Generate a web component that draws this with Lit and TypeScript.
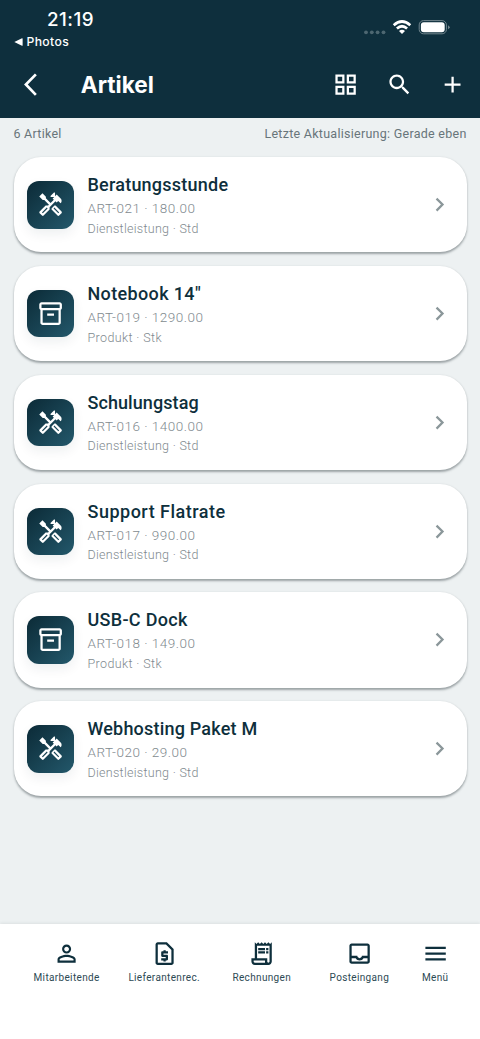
import { LitElement, html, css, svg } from "lit";
import { customElement, property } from "lit/decorators.js";
import { styleMap } from "lit/directives/style-map.js";

const ICONS: Record<string, string> = {
  back: "M17.5 3.77L15.8 2.1 6.2 12l9.6 9.9 1.7-1.67L9.54 12z",
  grid: "M3 3v8h8V3H3zm6 6H5V5h4v4zm-6 4v8h8v-8H3zm6 6H5v-4h4v4zm4-16v8h8V3h-8zm6 6h-4V5h4v4zm-6 4v8h8v-8h-8zm6 6h-4v-4h4v4z",
  search:
    "M15.5 14h-.79l-.28-.27C15.41 12.59 16 11.11 16 9.5 16 5.91 13.09 3 9.5 3S3 5.91 3 9.5 5.91 16 9.5 16c1.61 0 3.09-.59 4.23-1.57l.27.28v.79l5 4.99L20.49 19l-4.99-5zm-6 0C7.01 14 5 11.99 5 9.5S7.01 5 9.5 5 14 7.01 14 9.5 11.99 14 9.5 14z",
  add: "M19 13h-6v6h-2v-6H5v-2h6V5h2v6h6v2z",
  tools:
    "M21.67 18.17l-5.3-5.3h-.99l-2.54 2.54v.99l5.3 5.3c.39.39 1.02.39 1.41 0l2.12-2.12c.39-.38.39-1.02 0-1.41zm-2.83 1.42l-4.24-4.24.71-.71 4.24 4.24-.71.71zM17.34 10.19l1.41-1.41 2.12 2.12c1.17-1.17 1.17-3.07 0-4.24l-3.54-3.54-1.41 1.41V1.71L15.22 1l-3.54 3.54.71.71h2.83l-1.41 1.41 1.06 1.06-2.89 2.89-4.13-4.13V5.06L4.83 2.04 2 4.87 5.03 7.9h1.41l4.13 4.13-.85.85H7.6l-5.3 5.3c-.39.39-.39 1.02 0 1.41l2.12 2.12c.39.39 1.02.39 1.41 0l5.3-5.3v-2.12l5.15-5.15 1.06 1.05zm-7.98 5.15l-4.24 4.24-.71-.71 4.24-4.24.71.71z",
  box: "M20 2H4c-1 0-2 .9-2 2v3.01c0 .72.43 1.34 1 1.69V20c0 1.1 1.1 2 2 2h14c.9 0 2-.9 2-2V8.7c.57-.35 1-.97 1-1.69V4c0-1.1-1-2-2-2zm-1 18H5V9h14v11zm1-13H4V4h16v3zM9 12h6v2H9z",
  chevron: "M10 6L8.59 7.41 13.17 12l-4.58 4.59L10 18l6-6z",
  person:
    "M12 5.9c1.16 0 2.1.94 2.1 2.1s-.94 2.1-2.1 2.1S9.9 9.16 9.9 8s.94-2.1 2.1-2.1m0 9c2.97 0 6.1 1.46 6.1 2.1v1.1H5.9V17c0-.64 3.13-2.1 6.1-2.1M12 4C9.79 4 8 5.79 8 8s1.79 4 4 4 4-1.79 4-4-1.79-4-4-4zm0 9c-2.67 0-8 1.34-8 4v3h16v-3c0-2.66-5.33-4-8-4z",
  quote:
    "M14 2H6c-1.1 0-1.99.9-1.99 2L4 20c0 1.1.89 2 1.99 2H18c1.1 0 2-.9 2-2V8l-6-6zM6 20V4h7.17L18 8.83V20H6zM11 19h2v-1h1c.55 0 1-.45 1-1v-3c0-.55-.45-1-1-1h-3v-1h4v-2h-2V9h-2v1h-1c-.55 0-1 .45-1 1v3c0 .55.45 1 1 1h3v1H9v2h2v1z",
  receipt:
    "M19.5 3.5L18 2l-1.5 1.5L15 2l-1.5 1.5L12 2l-1.5 1.5L9 2 7.5 3.5 6 2v14H3v3c0 1.66 1.34 3 3 3h12c1.66 0 3-1.34 3-3V2l-1.5 1.5zM15 20H6c-.55 0-1-.45-1-1v-1h10v2zm4-1c0 .55-.45 1-1 1s-1-.45-1-1v-3H8V5h11v14zM9 7h6v2H9zM16 7h2v2h-2zM9 10h6v2H9zM16 10h2v2h-2z",
  inbox:
    "M19 3H5c-1.1 0-2 .9-2 2v14c0 1.1.9 2 2 2h14c1.1 0 2-.9 2-2V5c0-1.1-.9-2-2-2zm0 16H5v-3h3.56c.69 1.19 1.97 2 3.45 2s2.75-.81 3.45-2H19v3zm0-5h-4.99c0 1.1-.9 2-2 2s-2-.9-2-2H5V5h14v9z",
  menu: "M3 18h18v-2H3v2zm0-5h18v-2H3v2zm0-7v2h18V6H3z",
};

@customElement("app-icon")
class AppIcon extends LitElement {
  @property() name = "";
  static styles = css`
    :host { display: block; width: 27.2px; height: 27.2px; flex: none; }
    .glyph { display: block; width: 100%; height: 100%; fill: currentColor; }
  `;
  render() {
    return html`<svg class="glyph" viewBox="0 0 24 24">${svg`<path d=${ICONS[this.name]}></path>`}</svg>`;
  }
}

interface Kind {
  label: string;
  icon: string;
  tracking: number;
}

interface Article {
  name: string;
  tracking: number;
  info: string;
  kind: Kind;
}

const service: Kind = { label: "Dienstleistung · Std", icon: "tools", tracking: 0.29 };
const product: Kind = { label: "Produkt · Stk", icon: "box", tracking: 0.38 };
const ARTICLES: Article[] = [
  { name: "Beratungsstunde", tracking: 0.23, info: "ART-021 · 180.00", kind: service },
  { name: 'Notebook 14"', tracking: 0.36, info: "ART-019 · 1290.00", kind: product },
  { name: "Schulungstag", tracking: 0.08, info: "ART-016 · 1400.00", kind: service },
  { name: "Support Flatrate", tracking: 0.5, info: "ART-017 · 990.00", kind: service },
  { name: "USB-C Dock", tracking: 0.3, info: "ART-018 · 149.00", kind: product },
  { name: "Webhosting Paket M", tracking: 0.2, info: "ART-020 · 29.00", kind: service },
];

const TABS = [
  { label: "Mitarbeitende", icon: "person" },
  { label: "Lieferantenrec.", icon: "quote" },
  { label: "Rechnungen", icon: "receipt" },
  { label: "Posteingang", icon: "inbox" },
  { label: "Menü", icon: "menu" },
];

@customElement("article-card")
class ArticleCard extends LitElement {
  @property({ attribute: false }) article!: Article;
  static styles = css`
    :host {
      display: flex; align-items: center; box-sizing: border-box; height: 95.2px;
      padding: 0 13.3px; border-radius: 27px; background: #fff;
      box-shadow: 0 1.6px 2.2px rgba(20, 35, 40, 0.38);
    }
    .tile {
      display: grid; place-items: center; width: 47.4px; height: 47.4px; border-radius: 12px;
      background: linear-gradient(135deg, #0e2f3c 10%, #23586b 100%); color: #fff;
      box-shadow: 0 5px 12px rgba(14, 47, 60, 0.07);
    }
    .text { flex: 1; margin: 3px 0 0 13.3px; white-space: nowrap; }
    .name { font-size: 18px; line-height: 24px; font-weight: 500; color: #0e2f3c; }
    .info { margin-top: 1px; font-size: 13.5px; line-height: 20.6px; letter-spacing: 0.51px; font-weight: 300; color: #7f8a8f; }
    .kind { font-size: 12.5px; line-height: 20.6px; font-weight: 300; color: #7f8a8f; }
    .chevron { color: #8b979a; }
  `;
  render() {
    const a = this.article;
    return html`
      <div class="tile"><app-icon name=${a.kind.icon}></app-icon></div>
      <div class="text">
        <div class="name" style=${styleMap({ letterSpacing: `${a.tracking}px` })}>${a.name}</div>
        <div class="info">${a.info}</div>
        <div class="kind" style=${styleMap({ letterSpacing: `${a.kind.tracking}px` })}>${a.kind.label}</div>
      </div>
      <app-icon class="chevron" name="chevron"></app-icon>
    `;
  }
}

@customElement("app-root")
class AppRoot extends LitElement {
  static styles = css`
    :host {
      display: flex; flex-direction: column; width: 480px; height: 1039px; overflow: hidden;
      background: #edf1f2; font-family: Roboto, "Liberation Sans", sans-serif; white-space: nowrap;
    }
    .header { height: 117.5px; background: #0e2f3d; color: #fff; flex: none; }
    .status { display: flex; justify-content: space-between; height: 52.4px; }
    .clock {
      padding: 9px 0 0 47px; font: 500 18.8px/22px Inter, sans-serif; letter-spacing: 0.5px;
    }
    .origin {
      display: flex; align-items: center; gap: 4px; padding: 2px 0 0 13.5px;
      font: 500 12.2px/17px Inter, sans-serif; letter-spacing: 0.35px;
    }
    .triangle { width: 9px; height: 8px; fill: #fff; }
    .signals { display: block; width: 90px; height: 20px; margin: 17px 28px 0 0; }
    .toolbar { display: flex; align-items: center; height: 63.6px; padding: 0 13.4px 0 17.2px; }
    .title {
      flex: 1; margin: 1px 0 0 36.4px; font: 700 22.6px/30px Inter, sans-serif; letter-spacing: 0;
    }
    .actions { display: flex; gap: 26.6px; }
    .summary {
      display: flex; justify-content: space-between; height: 39.8px; padding: 0 13.4px;
      font-size: 12.5px; line-height: 32.6px; letter-spacing: 0.27px; color: #68757a;
    }
    .list { display: flex; flex-direction: column; gap: 13.62px; padding: 0 13.5px; flex: 1; }
    .tabs {
      display: grid; grid-template-columns: 97.6px 97.6px 97.6px 97.6px 54px; box-sizing: border-box;
      flex: none; height: 114.6px; padding: 15.8px 0 0 17.8px; background: #fff; color: #0e2f3c;
      box-shadow: 0 -1px 3px rgba(20, 35, 40, 0.08);
    }
    .tab { display: flex; flex-direction: column; align-items: center; gap: 3.4px; }
    .label { font-size: 10px; line-height: 14px; letter-spacing: 0.34px; color: #2d4a54; }
  `;
  render() {
    return html`
      <header class="header">
        <div class="status">
          <div>
            <div class="clock">21:19</div>
            <div class="origin">
              <svg class="triangle" viewBox="0 0 9 8"><path d="M0.3 4L8 .2Q8.6 0 8.6.7V7.3Q8.6 8 8 7.8Z"></path></svg>
              <span>Photos</span>
            </div>
          </div>
          <svg class="signals" viewBox="362 17 90 20">
            <g fill="#4d6771">
              <circle cx="366" cy="32.3" r="1.9"></circle><circle cx="371.8" cy="32.3" r="1.9"></circle>
              <circle cx="377.6" cy="32.3" r="1.9"></circle><circle cx="383.5" cy="32.3" r="1.9"></circle>
            </g>
            <g fill="none" stroke="#fff" stroke-width="2.7">
              <path d="M393.7 25.2Q402 17.8 410.3 25.2"></path><path d="M396.9 28.5Q402 24 407.1 28.5"></path>
            </g>
            <path fill="#fff" d="M399 31Q402 28.7 405 31L402 34.1Z"></path>
            <rect x="419.2" y="20.6" width="27.2" height="13.2" rx="4.3" fill="none" stroke="#72868e"></rect>
            <rect x="420.9" y="22.2" width="23.8" height="10" rx="2.9" fill="#fff"></rect>
            <path d="M448 25.2Q449.7 26 449.7 27.2T448 29.2Z" fill="#72868e"></path>
          </svg>
        </div>
        <div class="toolbar">
          <app-icon name="back"></app-icon>
          <div class="title">Artikel</div>
          <div class="actions">
            <app-icon name="grid"></app-icon>
            <app-icon name="search"></app-icon>
            <app-icon name="add"></app-icon>
          </div>
        </div>
      </header>
      <div class="summary"><span>6 Artikel</span><span>Letzte Aktualisierung: Gerade eben</span></div>
      <main class="list">${ARTICLES.map((a) => html`<article-card .article=${a}></article-card>`)}</main>
      <nav class="tabs">
        ${TABS.map(
          (t) => html`<div class="tab"><app-icon name=${t.icon}></app-icon><span class="label">${t.label}</span></div>`
        )}
      </nav>
    `;
  }
}
